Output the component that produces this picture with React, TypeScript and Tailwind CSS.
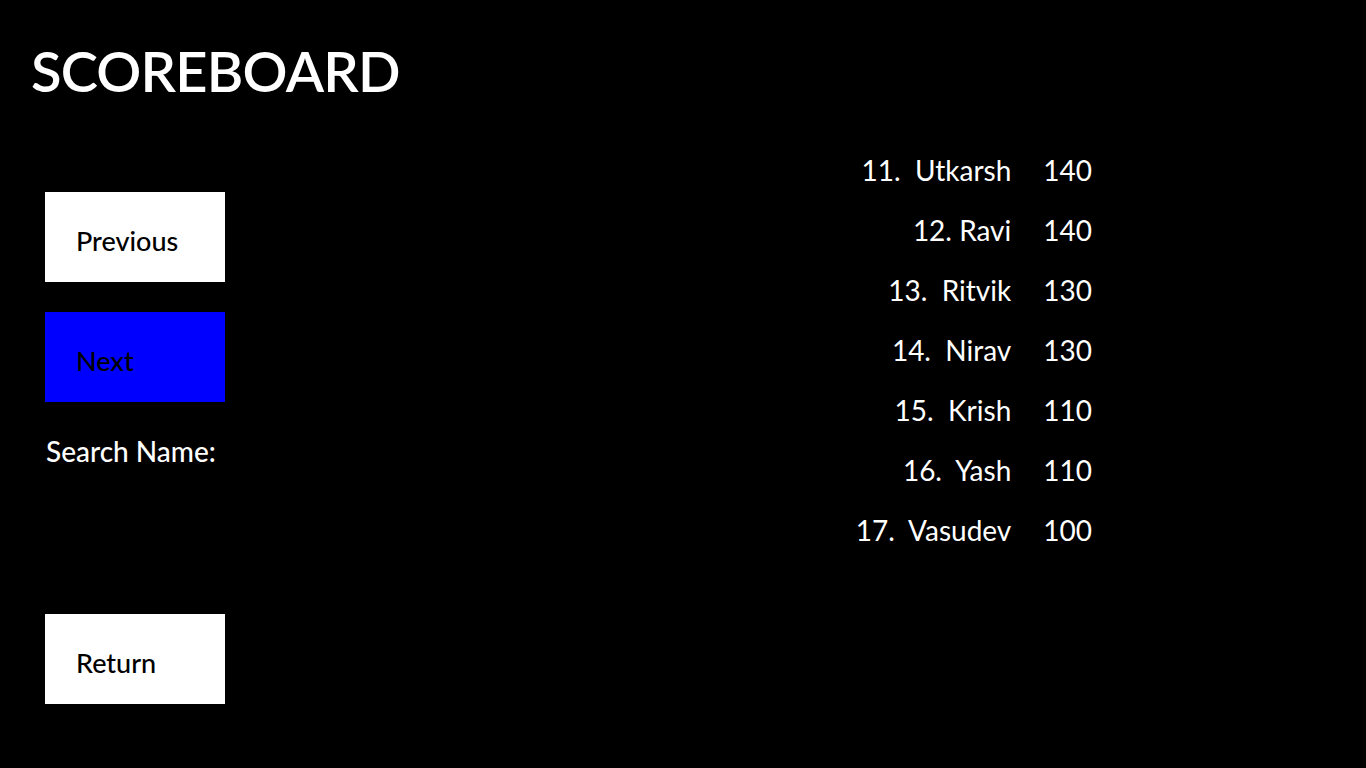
const scores = [
  { rank: "11.  ", name: "Utkarsh", score: 140 },
  { rank: "12. ", name: "Ravi", score: 140 },
  { rank: "13.  ", name: "Ritvik", score: 130 },
  { rank: "14.  ", name: "Nirav", score: 130 },
  { rank: "15.  ", name: "Krish", score: 110 },
  { rank: "16.  ", name: "Yash", score: 110 },
  { rank: "17.  ", name: "Vasudev", score: 100 },
];

const font = { fontFamily: "Lato, 'Open Sans', sans-serif" };

export default function App() {
  return (
    <div className="min-h-screen w-full bg-black text-white" style={font}>
      <h1 className="pl-[31px] pt-[43px] text-[56px] font-semibold leading-none tracking-[-0.8px]">
        SCOREBOARD
      </h1>

      <div className="flex">
        {/* Left controls */}
        <div className="flex w-[180px] flex-col pl-[45px] pt-[93px] box-content">
          <button className="h-[90px] w-[180px] bg-white pl-[31px] pt-[8px] text-left text-[27px] font-medium text-black">
            Previous
          </button>
          <button className="mt-[30px] h-[90px] w-[180px] bg-[#0000ff] pl-[31px] pt-[8px] text-left text-[27px] font-medium text-black">
            Next
          </button>
          <p className="mt-[35px] whitespace-nowrap pl-px text-[28px] font-medium leading-none">
            Search Name:
          </p>
          <button className="mt-[149px] h-[90px] w-[180px] bg-white pl-[31px] pt-[8px] text-left text-[27px] font-medium text-black">
            Return
          </button>
        </div>

        {/* Score list */}
        <div className="ml-auto mr-[274px] flex flex-col pt-[41px]">
          {scores.map((row) => (
            <div
              key={row.rank}
              className="flex h-[60px] items-center justify-end gap-[32px] text-[28px] leading-none"
            >
              <span className="whitespace-pre">
                {row.rank}
                {row.name}
              </span>
              <span>{row.score}</span>
            </div>
          ))}
        </div>
      </div>
    </div>
  );
}
